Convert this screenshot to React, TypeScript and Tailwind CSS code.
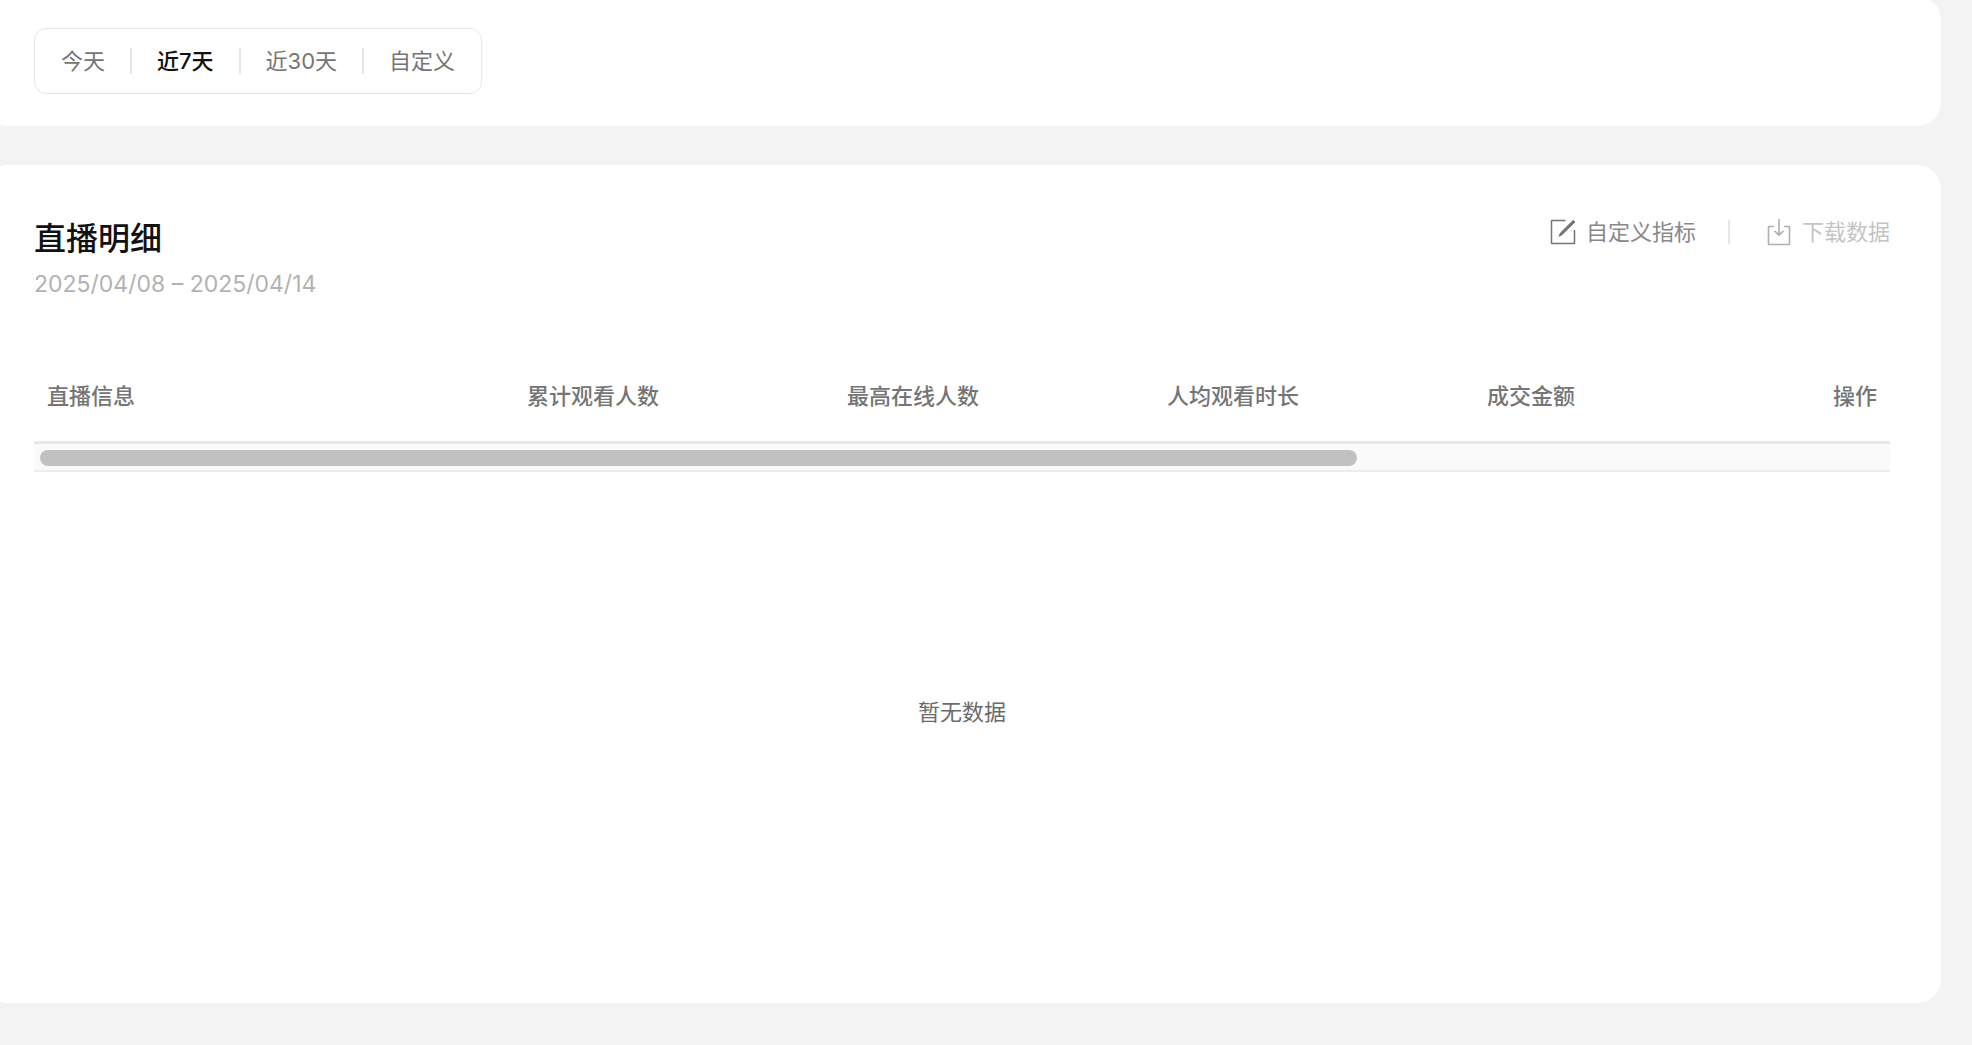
import { useState } from "react";

const ranges = [
  { id: "today", label: "今天" },
  { id: "7d", label: "近7天" },
  { id: "30d", label: "近30天" },
  { id: "custom", label: "自定义" },
];

const columns = [
  { title: "直播信息", className: "w-[480px] text-left" },
  { title: "累计观看人数", className: "w-[320px] text-left" },
  { title: "最高在线人数", className: "w-[320px] text-left" },
  { title: "人均观看时长", className: "w-[320px] text-left" },
  { title: "成交金额", className: "text-left" },
  { title: "操作", className: "w-[120px] text-right" },
];

const EditIcon = () => (
  <svg width="26" height="26" viewBox="0 0 26 26" fill="none" aria-hidden="true">
    <path
      d="M15.5 1.5H2a.5.5 0 0 0-.5.5v22a.5.5 0 0 0 .5.5h22a.5.5 0 0 0 .5-.5V11"
      stroke="#757575"
      strokeWidth="1.5"
    />
    <path d="M23.2 1.3l1.8 1.8L12 15.8l-3.100 1.600 1.400-3.300z" fill="#757575" stroke="#757575" strokeWidth=".8" />
  </svg>
);

const DownloadIcon = () => (
  <svg width="26" height="28" viewBox="0 0 26 28" fill="none" aria-hidden="true">
    <path
      d="M8 8.5H3a.5.5 0 0 0-.5.5v17a.5.5 0 0 0 .5.5h20a.5.5 0 0 0 .5-.5V9a.5.5 0 0 0-.5-.5H18"
      stroke="#b0b0b0"
      strokeWidth="1.6"
    />
    <path d="M13 1v16M8.5 12.8l4.5 4.300 4.500-4.300" stroke="#b0b0b0" strokeWidth="1.6" />
  </svg>
);

const RangeTabs = () => {
  const [active, setActive] = useState("7d");

  return (
    <div className="inline-flex h-[66px] items-center rounded-xl border border-[#e6e6e6] px-px">
      {ranges.map((range, i) => (
        <div key={range.id} className="flex items-center">
          {i > 0 && <span className="h-[26px] w-0.5 bg-[#e6e6e6]" />}
          <button
            type="button"
            onClick={() => setActive(range.id)}
            className={
              active === range.id
                ? "px-[25px] font-medium text-[#111]"
                : "px-[25px] text-[#757575]"
            }
          >
            {range.label}
          </button>
        </div>
      ))}
    </div>
  );
};

const App = () => {
  return (
    <main className="flex min-h-screen flex-col gap-[39px] overflow-hidden bg-[#f3f3f3] pr-[31px] font-['Inter','Noto_Sans_CJK_SC',sans-serif] text-[22px] leading-8">
      <section className="-mt-1 -ml-4 rounded-3xl bg-white px-[50px] pt-8 pb-8">
        <RangeTabs />
      </section>

      <section className="-ml-4 rounded-3xl bg-white pt-[51px] pr-[51px] pb-[51px] pl-[50px]">
        <header className="flex items-start justify-between">
          <div>
            <h1 className="text-[32px] leading-[46px] font-medium text-[#111]">直播明细</h1>
            <p className="mt-1.5 text-[23px] text-[#b2b2b2]">2025/04/08 – 2025/04/14</p>
          </div>
          <div className="flex items-center">
            <button type="button" className="flex items-center gap-2.5 text-[#888]">
              <EditIcon />
              自定义指标
            </button>
            <span className="mr-9 ml-8 h-6 w-0.5 bg-[#e6e6e6]" />
            <button type="button" disabled className="flex items-center gap-2.5 text-[#c4c4c4]">
              <DownloadIcon />
              下载数据
            </button>
          </div>
        </header>

        <table className="mt-[51px] w-full table-fixed border-b-3 border-[#e8e8e8]">
          <thead>
            <tr className="h-[91px]">
              {columns.map((col) => (
                <th
                  key={col.title}
                  scope="col"
                  className={`${col.className} px-[13px] font-medium text-[#757575]`}
                >
                  {col.title}
                </th>
              ))}
            </tr>
          </thead>
        </table>

        {/* horizontal scroll track */}
        <div className="border-b-2 border-[#ededed] bg-[#fafafa] px-1.5 pt-1.5 pb-1">
          <div className="h-4 w-5/7 rounded-full bg-[#c1c1c1]" />
        </div>

        <div className="flex h-[480px] items-center justify-center text-[#6b6b6b]">暂无数据</div>
      </section>
    </main>
  );
};

export default App;
